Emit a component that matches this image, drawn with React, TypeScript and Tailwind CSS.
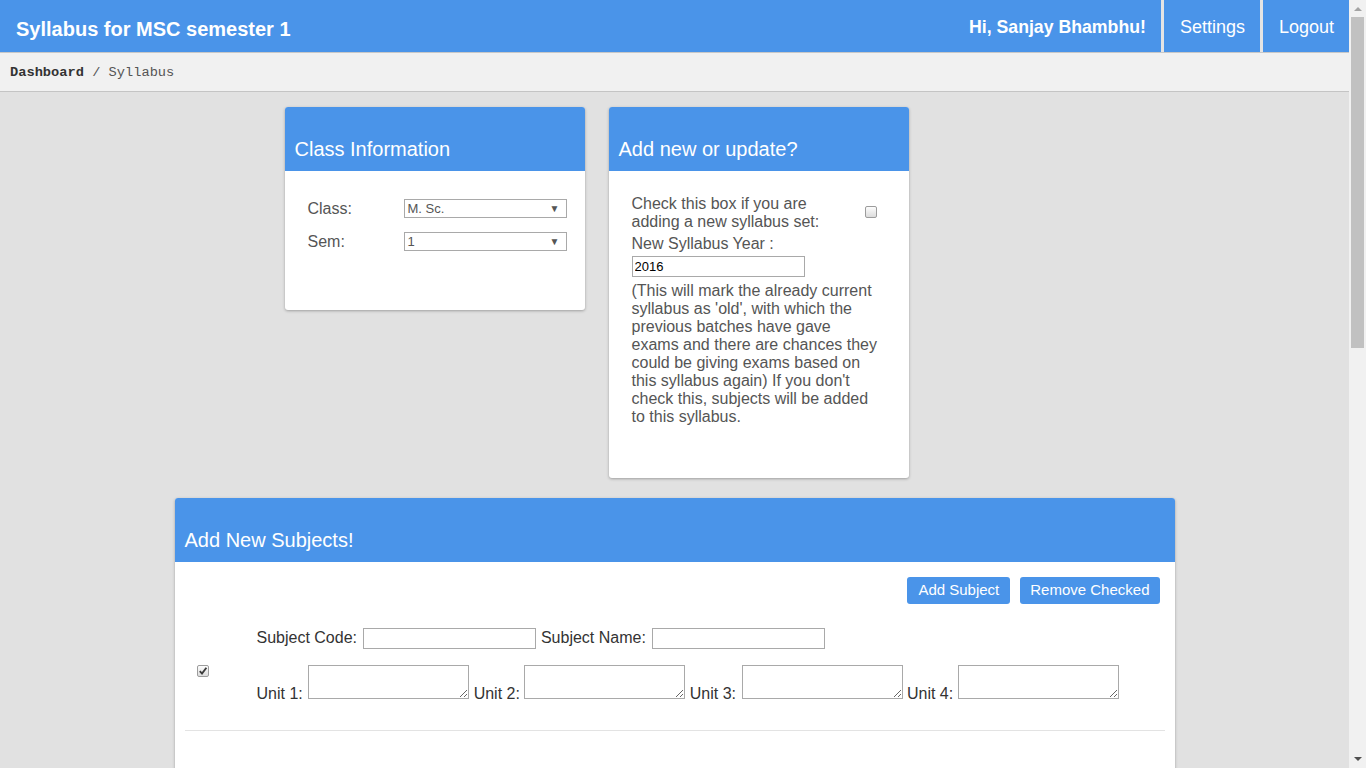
import React from "react";

function Box({ checked = false }: { checked?: boolean }) {
  return (
    <span className="inline-flex h-[12px] w-[12px] items-center justify-center rounded-[2px] border border-[#9c9c9c] bg-linear-to-b from-[#fdfdfd] to-[#dcdcdc]">
      {checked && (
        <svg width="10" height="10" viewBox="0 0 10 10">
          <path d="M1.8 5.2 L4 7.6 L8.4 1.8" fill="none" stroke="#3c3c3c" strokeWidth="1.9" />
        </svg>
      )}
    </span>
  );
}

function CardHeader({ title }: { title: string }) {
  return (
    <div className="flex h-[64px] items-end rounded-t-[3px] bg-[#4a94e9] px-[10px] pb-[11px] text-[20px] leading-[22px] text-white">
      {title}
    </div>
  );
}

function Select({ value }: { value: string }) {
  return (
    <div className="flex h-[19px] w-[163px] items-center justify-between border border-[#a9a9a9] bg-white pl-[3px] pr-[6px] text-[13px] text-[#555]">
      <span>{value}</span>
      <span className="text-[10px] leading-none text-[#555]">▼</span>
    </div>
  );
}

export default function App() {
  const blue = "bg-[#4a94e9]";
  return (
    <div className="flex h-[768px] w-[1366px] overflow-hidden bg-[#e1e1e1] font-[family-name:Liberation_Sans,Arial,sans-serif]">
      <div className="flex min-w-0 flex-1 flex-col">
        {/* Top bar */}
        <header className={`flex h-[53px] shrink-0 border-b border-[#c8c8c8] ${blue} text-white`}>
          <div className="flex-1 pl-[16px] pt-[18px] text-[20px] font-bold leading-[22px]">
            Syllabus for MSC semester 1
          </div>
          <div className="pr-[15px] pt-[17px] text-[17.7px] font-bold leading-[20px]">Hi, Sanjay Bhambhu!</div>
          <div className="border-l-[3px] border-[#e4e4e4] pl-[16px] pr-[15px] pt-[17px] text-[18px] leading-[20px]">
            Settings
          </div>
          <div className="border-l-[3px] border-[#e4e4e4] pl-[16px] pr-[15px] pt-[17px] text-[18px] leading-[20px]">
            Logout
          </div>
        </header>

        {/* Breadcrumb */}
        <div className="flex h-[39px] shrink-0 items-center border-b border-[#c4c4c4] bg-[#f1f1f1] pl-[10px] pt-[2px] font-[family-name:Liberation_Mono,monospace] text-[13.7px] text-[#555]">
          <span className="font-bold text-[#333]">Dashboard</span>
          <span>&nbsp;/ Syllabus</span>
        </div>

        {/* Content */}
        <main className="mx-auto w-[1000px] pt-[15px]">
          <div className="flex items-start gap-[24px] pl-[110px]">
            {/* Class information */}
            <div className="w-[300px] rounded-[3px] bg-white shadow-[0_1px_3px_rgba(0,0,0,0.3)]">
              <CardHeader title="Class Information" />
              <div className="flex flex-col gap-[14px] pb-[59px] pl-[23px] pr-[18px] pt-[28px] text-[16px] text-[#555]">
                <div className="flex h-[19px] items-center">
                  <span className="w-[96px]">Class:</span>
                  <Select value="M. Sc." />
                </div>
                <div className="flex h-[19px] items-center">
                  <span className="w-[96px]">Sem:</span>
                  <Select value="1" />
                </div>
              </div>
            </div>

            {/* Add new or update */}
            <div className="w-[300px] rounded-[3px] bg-white shadow-[0_1px_3px_rgba(0,0,0,0.3)]">
              <CardHeader title="Add new or update?" />
              <div className="px-[23px] pb-[52px] pt-[24px] text-[16px] leading-[18px] text-[#555]">
                <div className="flex items-center">
                  <span className="w-[215px]">Check this box if you are adding a new syllabus set:</span>
                  <span className="ml-auto mr-[9px] flex -translate-y-[1px]">
                    <Box />
                  </span>
                </div>
                <div className="mt-[4px]">New Syllabus Year :</div>
                <input
                  readOnly
                  value="2016"
                  className="mt-[3px] block h-[21px] w-[173px] border border-[#a9a9a9] px-[2px] text-[13px] text-black outline-none"
                />
                <p className="mt-[5px] w-[248px]">
                  (This will mark the already current syllabus as 'old', with which the previous batches have gave
                  exams and there are chances they could be giving exams based on this syllabus again) If you don't
                  check this, subjects will be added to this syllabus.
                </p>
              </div>
            </div>
          </div>

          {/* Add new subjects */}
          <div className="mt-[20px] h-[400px] rounded-[3px] bg-white shadow-[0_1px_3px_rgba(0,0,0,0.3)]">
            <CardHeader title="Add New Subjects!" />
            <div className="px-[10px]">
              <div className="flex justify-end gap-[10px] pr-[5px] pt-[15px]">
                <button className={`h-[27px] rounded-[3px] ${blue} px-[11px] text-[15px] text-white`}>Add Subject</button>
                <button className={`h-[27px] rounded-[3px] ${blue} px-[10px] text-[15px] text-white`}>
                  Remove Checked
                </button>
              </div>
              <div className="flex items-center border-b border-[#e3e3e3] pb-[27px] pt-[24px]">
                <div className="w-[72px] pl-[12px] pt-[11px]">
                  <span className="flex">
                    <Box checked />
                  </span>
                </div>
                <div className="text-[16px] leading-[18px] text-[#333]">
                  <div>
                    Subject Code:{" "}
                    <input className="ml-[2px] h-[21px] w-[173px] border border-[#a9a9a9] align-middle outline-none" />{" "}
                    Subject Name:{" "}
                    <input className="ml-[2px] h-[21px] w-[173px] border border-[#a9a9a9] align-middle outline-none" />
                  </div>
                  <div className="mt-[16px]">
                    Unit 1:{" "}
                    <textarea className="ml-[1px] h-[34px] w-[161px] resize border border-[#a9a9a9] align-baseline outline-none" />{" "}
                    Unit 2:{" "}
                    <textarea className="h-[34px] w-[161px] resize border border-[#a9a9a9] align-baseline outline-none" />{" "}
                    Unit 3:{" "}
                    <textarea className="ml-[1px] h-[34px] w-[161px] resize border border-[#a9a9a9] align-baseline outline-none" />{" "}
                    Unit 4:{" "}
                    <textarea className="h-[34px] w-[161px] resize border border-[#a9a9a9] align-baseline outline-none" />
                  </div>
                </div>
              </div>
            </div>
          </div>
        </main>
      </div>

      {/* Scrollbar */}
      <aside className="flex w-[17px] shrink-0 flex-col items-center bg-[#f1f1f1]">
        <div className="flex h-[17px] items-center justify-center">
          <svg width="8" height="5" viewBox="0 0 8 5">
            <path d="M0 5 L4 1 L8 5 Z" fill="#a3a3a3" />
          </svg>
        </div>
        <div className="h-[331px] w-[13px] bg-[#c1c1c1]" />
        <div className="flex-1" />
        <div className="flex h-[17px] items-center justify-center">
          <svg width="8" height="5" viewBox="0 0 8 5">
            <path d="M0 0 L8 0 L4 4 Z" fill="#505050" />
          </svg>
        </div>
      </aside>
    </div>
  );
}
